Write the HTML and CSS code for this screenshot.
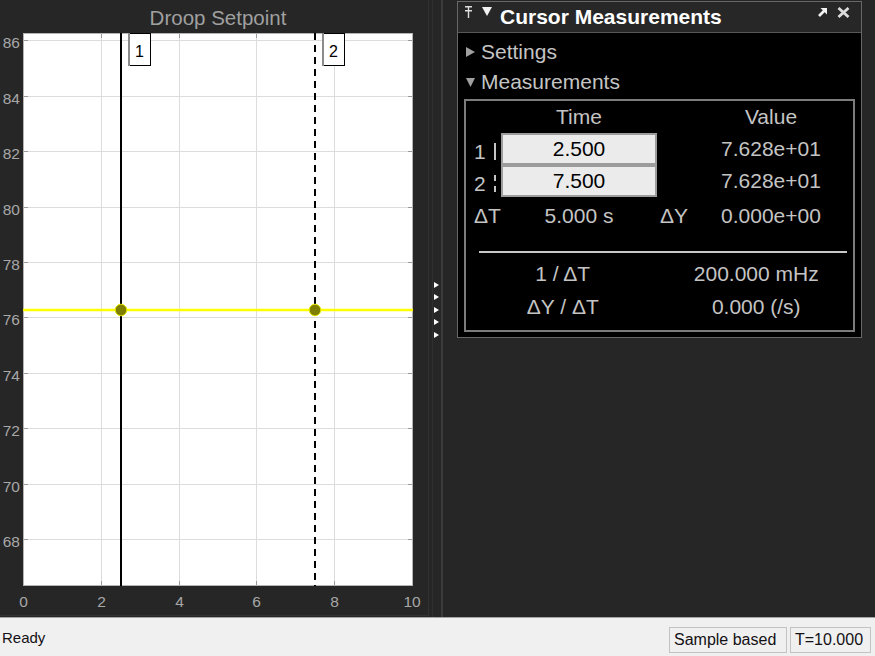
FILE: index.html
```html
<!DOCTYPE html>
<html lang="en">
<head>
<meta charset="utf-8">
<title>Scope - Cursor Measurements</title>
<link rel="stylesheet" href="styles.css">
</head>
<body>
<div class="app">
  <div class="main">
    <div class="plot-panel">
      <svg class="chart" width="428" height="615" viewBox="0 0 428 615">
        <text class="chart-title" x="218" y="25">Droop Setpoint</text>
        <rect x="23" y="33" width="390" height="553" fill="#ffffff"/>
        <g stroke="#dcdcdc" stroke-width="1">
          <path d="M101.5 33V586M179.5 33V586M256.5 33V586M334.5 33V586"/>
          <path d="M23 40.5H413M23 96.5H413M23 151.5H413M23 207.5H413M23 262.5H413M23 317.5H413M23 373.5H413M23 428.5H413M23 484.5H413M23 539.5H413"/>
        </g>
        <g stroke="#9a9a9a" stroke-width="1">
          <path d="M23 40.5h5M23 96.5h5M23 151.5h5M23 207.5h5M23 262.5h5M23 317.5h5M23 373.5h5M23 428.5h5M23 484.5h5M23 539.5h5"/>
          <path d="M413 40.5h-5M413 96.5h-5M413 151.5h-5M413 207.5h-5M413 262.5h-5M413 317.5h-5M413 373.5h-5M413 428.5h-5M413 484.5h-5M413 539.5h-5"/>
          <path d="M101.5 586v-5M179.5 586v-5M256.5 586v-5M334.5 586v-5M101.5 33v5M179.5 33v5M256.5 33v5M334.5 33v5"/>
        </g>
        <rect x="23.5" y="33.5" width="389" height="552" fill="none" stroke="#b4b4b4"/>
        <g class="tick-y">
          <text x="20" y="48">86</text>
          <text x="20" y="104">84</text>
          <text x="20" y="159">82</text>
          <text x="20" y="215">80</text>
          <text x="20" y="270">78</text>
          <text x="20" y="325">76</text>
          <text x="20" y="381">74</text>
          <text x="20" y="436">72</text>
          <text x="20" y="492">70</text>
          <text x="20" y="547">68</text>
        </g>
        <g class="tick-x">
          <text x="23.5" y="607">0</text>
          <text x="101.5" y="607">2</text>
          <text x="179.5" y="607">4</text>
          <text x="256.5" y="607">6</text>
          <text x="334.5" y="607">8</text>
          <text x="412" y="607">10</text>
        </g>
        <line x1="121" y1="33" x2="121" y2="586" stroke="#000" stroke-width="2"/>
        <line x1="315" y1="33" x2="315" y2="586" stroke="#000" stroke-width="2" stroke-dasharray="7 5"/>
        <line x1="23" y1="310" x2="413" y2="310" stroke="#ffff00" stroke-width="2.5"/>
        <circle cx="121" cy="310" r="5.8" fill="#808000" stroke="#e8e800" stroke-width="1"/>
        <circle cx="315" cy="310" r="5.8" fill="#808000" stroke="#e8e800" stroke-width="1"/>
        <rect x="128.5" y="33.5" width="22" height="32" fill="#fff" stroke="#000"/>
        <line x1="129" y1="33" x2="129" y2="66" stroke="#8c8c8c" stroke-width="2"/>
        <text class="cur-lbl" x="139.5" y="57">1</text>
        <rect x="322.5" y="33.5" width="22" height="32" fill="#fff" stroke="#000"/>
        <line x1="323" y1="33" x2="323" y2="66" stroke="#8c8c8c" stroke-width="2"/>
        <text class="cur-lbl" x="333.5" y="57">2</text>
      </svg>
    </div>
    <div class="splitter">
      <span class="grip"></span>
      <span class="grip"></span>
      <span class="grip"></span>
      <span class="grip"></span>
      <span class="grip"></span>
    </div>
    <div class="side">
      <div class="cm-panel">
        <div class="cm-title">
          <svg class="ic-pin" width="7" height="12" viewBox="0 0 7 12"><path d="M0 0.7H7M0 4.7H7M3.5 1V12" stroke="#dedede" stroke-width="1.4" fill="none"/></svg>
          <svg class="ic-tri" width="10" height="9" viewBox="0 0 10 9"><polygon points="0,0 10,0 5,9" fill="#f2f2f2"/></svg>
          <span class="cm-name">Cursor Measurements</span>
          <svg class="ic-undock" width="9" height="9" viewBox="0 0 9 9"><polygon points="2.5,0 9,0 9,6.5" fill="#f2f2f2"/><path d="M7.5 1.5L1 8" stroke="#f2f2f2" stroke-width="2.6"/></svg>
          <svg class="ic-close" width="13" height="11" viewBox="0 0 13 11"><path d="M1.5 1L11.5 10M11.5 1L1.5 10" stroke="#dcdcdc" stroke-width="2.8"/></svg>
        </div>
        <div class="cm-body">
          <div class="section"><svg width="9" height="10" viewBox="0 0 9 10"><polygon points="0,0 9,5 0,10" fill="#a0a0a0"/></svg><span>Settings</span></div>
          <div class="section"><svg width="9" height="9" viewBox="0 0 9 9"><polygon points="0,0 9,0 4.5,9" fill="#a0a0a0"/></svg><span>Measurements</span></div>
          <div class="meas">
            <div class="grid-top">
              <div class="cell"></div>
              <div class="cell center">Time</div>
              <div class="cell"></div>
              <div class="cell center">Value</div>

              <div class="cell lbl low">1<i class="bar"></i></div>
              <div class="cell center inp">2.500</div>
              <div class="cell"></div>
              <div class="cell center">7.628e+01</div>

              <div class="cell lbl low">2<i class="bar dashed"></i></div>
              <div class="cell center inp">7.500</div>
              <div class="cell"></div>
              <div class="cell center">7.628e+01</div>

              <div class="cell lbl">ΔT</div>
              <div class="cell center">5.000 s</div>
              <div class="cell dl">ΔY</div>
              <div class="cell center">0.000e+00</div>
            </div>
            <div class="sep"></div>
            <div class="grid-bottom">
              <div class="cell center">1 / ΔT</div>
              <div class="cell center">200.000 mHz</div>
              <div class="cell center">ΔY / ΔT</div>
              <div class="cell center">0.000 (/s)</div>
            </div>
          </div>
        </div>
      </div>
    </div>
  </div>
  <div class="status">
    <span class="ready">Ready</span>
    <span class="sbox mode">Sample based</span>
    <span class="sbox time">T=10.000</span>
  </div>
</div>
</body>
</html>
```
FILE: styles.css
```css
* { box-sizing: border-box; }
html, body { margin: 0; padding: 0; }
body {
  width: 875px;
  height: 656px;
  overflow: hidden;
  background: #262626;
  font-family: "Liberation Sans", Arial, sans-serif;
}
.app { display: flex; flex-direction: column; height: 656px; }
.main { display: flex; height: 617px; background: #262626; }

/* plot */
.plot-panel {
  width: 429px;
  height: 616px;
  border-right: 1px solid #323232;
  border-bottom: 1px solid #323232;
}
.chart { display: block; }
.chart-title { font-size: 20.5px; fill: #a0a0a0; text-anchor: middle; }
.tick-y text { font-size: 15.5px; fill: #a8a8a8; text-anchor: end; }
.tick-x text { font-size: 15.5px; fill: #a8a8a8; text-anchor: middle; }
.cur-lbl { font-size: 16px; fill: #000; text-anchor: middle; }

/* splitter */
.splitter {
  width: 14px;
  display: flex;
  flex-direction: column;
  justify-content: center;
  align-items: flex-start;
  gap: 6.5px;
  padding-left: 5px;
  padding-top: 2px;
  border-right: 2px solid #3b3b3b;
  background: linear-gradient(to right, transparent 3px, #2f2f2f 3px, #2f2f2f 4px, transparent 4px);
}
.grip {
  width: 0;
  height: 0;
  border-left: 5px solid #ffffff;
  border-top: 3px solid transparent;
  border-bottom: 3px solid transparent;
}

/* right side */
.side { flex: 1; padding: 1px 13px 0 14px; }
.cm-panel { width: 405px; border: 1px solid #676767; background: #000; }
.cm-title {
  height: 31px;
  background: #272727;
  border-bottom: 1px solid #575757;
  display: flex;
  align-items: flex-start;
  padding: 0 11px 0 7px;
}
.ic-pin { margin-top: 4px; margin-right: 10px; }
.ic-tri { margin-top: 5px; margin-right: 8px; }
.cm-name {
  flex: 1;
  font-weight: bold;
  font-size: 21px;
  line-height: 30px;
  color: #ffffff;
}
.ic-undock { margin-top: 6px; margin-right: 10px; }
.ic-close { margin-top: 5px; }

.cm-body { padding-top: 4px; }
.section {
  height: 30px;
  display: flex;
  align-items: center;
  gap: 6px;
  padding-left: 8px;
  font-size: 21px;
  color: #c4c4c4;
}
.meas {
  margin: 2px 6px 5px 6px;
  border: 2px solid #7c7c7c;
  padding-bottom: 7px;
  font-size: 21px;
  color: #c4c4c4;
}
.grid-top {
  display: grid;
  grid-template-columns: 35px 156px 63px 102px;
  grid-template-rows: 32px 32px 32px 38px;
}
.cell { display: flex; align-items: center; white-space: nowrap; }
.center { justify-content: center; }
.lbl { padding-left: 8px; }
.low { padding-top: 5px; }
.dl { padding-left: 3px; }
.inp {
  background: #ebebeb;
  border: 2px solid #9c9c9c;
  color: #000;
}
.bar {
  display: inline-block;
  width: 2px;
  height: 17px;
  margin-left: 8px;
  background: #c4c4c4;
}
.bar.dashed {
  width: 0;
  background: none;
  border-left: 2px dashed #c4c4c4;
}
.sep {
  height: 2px;
  background: #c8c8c8;
  margin: 16px 6px 4px 13px;
}
.grid-bottom {
  display: grid;
  grid-template-columns: 1fr 1fr;
  grid-auto-rows: 33px;
}

/* status bar */
.status {
  height: 39px;
  border-top: 1px solid #a4a4a4;
  background: #f0f0f0;
  display: flex;
  align-items: flex-end;
  padding: 0 4px 3px 2px;
  color: #141014;
}
.ready { flex: 1; align-self: center; font-size: 15px; margin-top: 3px; }
.sbox {
  height: 26px;
  border: 1px solid #c2c2c2;
  font-size: 16px;
  padding-left: 4px;
  display: flex;
  align-items: center;
}
.sbox.mode { width: 118px; margin-right: 3px; }
.sbox.time { width: 81px; }
```
